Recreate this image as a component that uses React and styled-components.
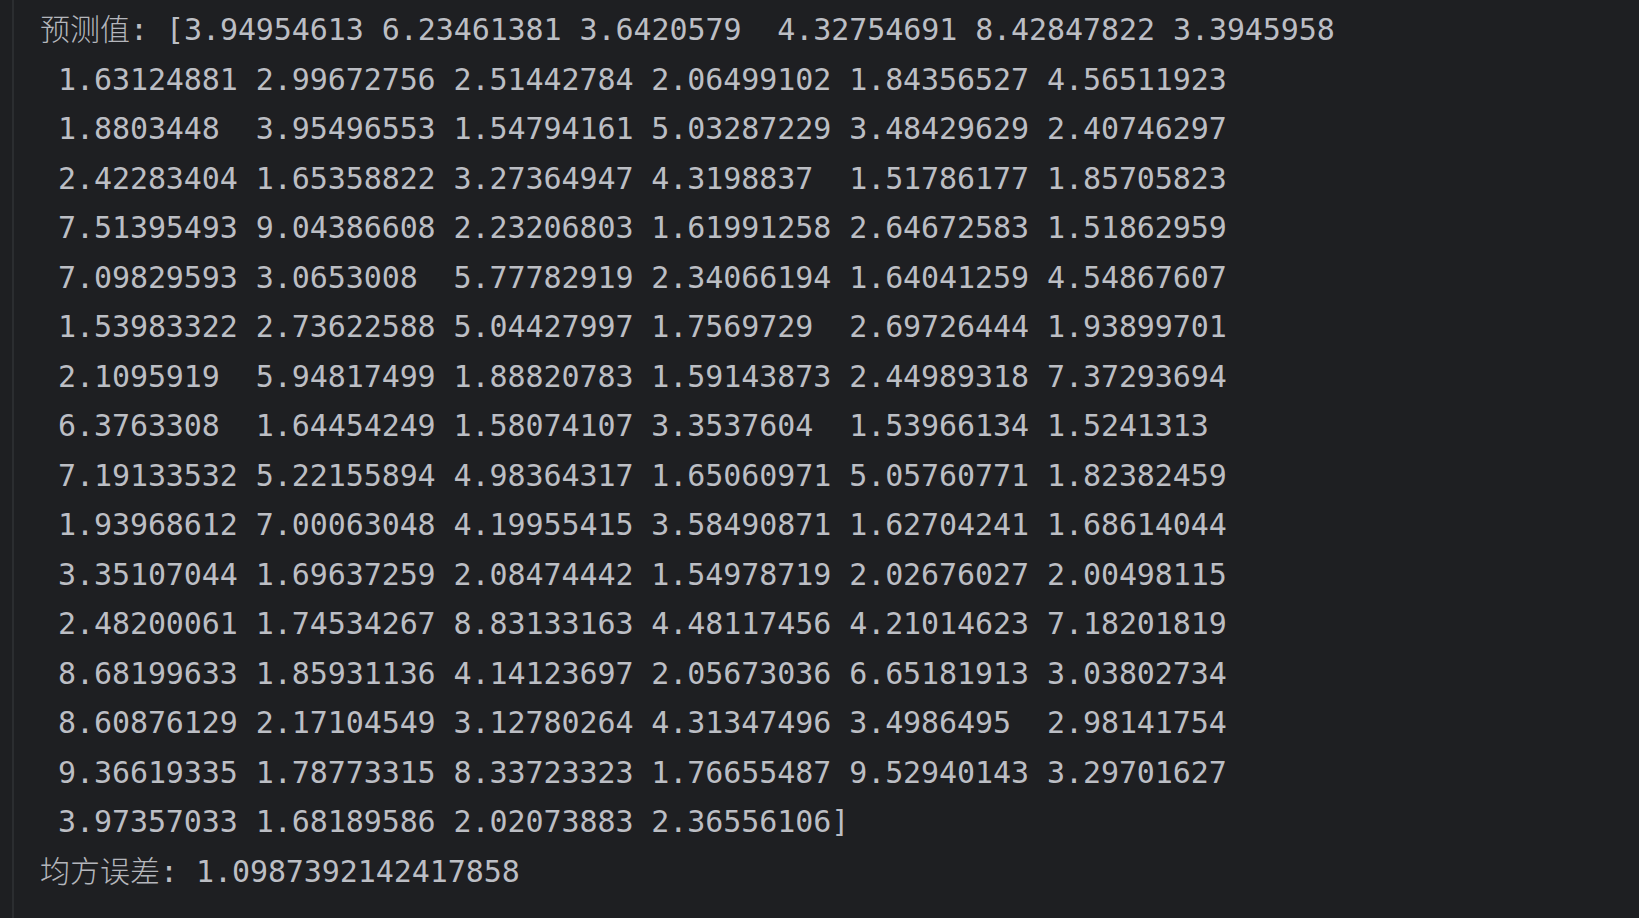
import React from "react";
import styled, { createGlobalStyle } from "styled-components";

const Global = createGlobalStyle`
  html, body {
    margin: 0;
    padding: 0;
    background: #1e1f22;
    height: 100%;
    overflow: hidden;
  }
  #root { height: 100%; }
`;

const Page = styled.div`
  display: flex;
  height: 918px;
  background: #1e1f22;
`;

const Gutter = styled.div`
  width: 12px;
  flex: none;
`;

const Divider = styled.div`
  width: 2px;
  flex: none;
  background: #2b2d30;
`;

const Console = styled.div`
  flex: 1;
  padding: 5px 0 0 26px;
  font-family: "DejaVu Sans Mono", "Noto Sans CJK SC", monospace;
  font-size: 30px;
  letter-spacing: -0.08px;
  line-height: 49.5px;
  color: #bcbec4;
  white-space: pre;
`;

const Line = styled.div`
  height: 49.5px;
`;

const Cjk = styled.span`
  font-family: "Noto Sans CJK SC", sans-serif;
  font-weight: 300;
  line-height: 1;
  letter-spacing: 0;
  color: #b4b6bc;
`;

const lines = [
  { label: "预测值", text: " [3.94954613 6.23461381 3.6420579  4.32754691 8.42847822 3.3945958" },
  { text: " 1.63124881 2.99672756 2.51442784 2.06499102 1.84356527 4.56511923" },
  { text: " 1.8803448  3.95496553 1.54794161 5.03287229 3.48429629 2.40746297" },
  { text: " 2.42283404 1.65358822 3.27364947 4.3198837  1.51786177 1.85705823" },
  { text: " 7.51395493 9.04386608 2.23206803 1.61991258 2.64672583 1.51862959" },
  { text: " 7.09829593 3.0653008  5.77782919 2.34066194 1.64041259 4.54867607" },
  { text: " 1.53983322 2.73622588 5.04427997 1.7569729  2.69726444 1.93899701" },
  { text: " 2.1095919  5.94817499 1.88820783 1.59143873 2.44989318 7.37293694" },
  { text: " 6.3763308  1.64454249 1.58074107 3.3537604  1.53966134 1.5241313" },
  { text: " 7.19133532 5.22155894 4.98364317 1.65060971 5.05760771 1.82382459" },
  { text: " 1.93968612 7.00063048 4.19955415 3.58490871 1.62704241 1.68614044" },
  { text: " 3.35107044 1.69637259 2.08474442 1.54978719 2.02676027 2.00498115" },
  { text: " 2.48200061 1.74534267 8.83133163 4.48117456 4.21014623 7.18201819" },
  { text: " 8.68199633 1.85931136 4.14123697 2.05673036 6.65181913 3.03802734" },
  { text: " 8.60876129 2.17104549 3.12780264 4.31347496 3.4986495  2.98141754" },
  { text: " 9.36619335 1.78773315 8.33723323 1.76655487 9.52940143 3.29701627" },
  { text: " 3.97357033 1.68189586 2.02073883 2.36556106]" },
  { label: "均方误差", text: " 1.0987392142417858" },
];

export default function App() {
  return (
    <>
      <Global />
      <Page>
        <Gutter />
        <Divider />
        <Console>
          {lines.map(({ label, text }, i) => (
            <Line key={i}>
              {label ? (
                <>
                  <Cjk>{label}</Cjk>:
                </>
              ) : null}
              {text}
            </Line>
          ))}
        </Console>
      </Page>
    </>
  );
}
